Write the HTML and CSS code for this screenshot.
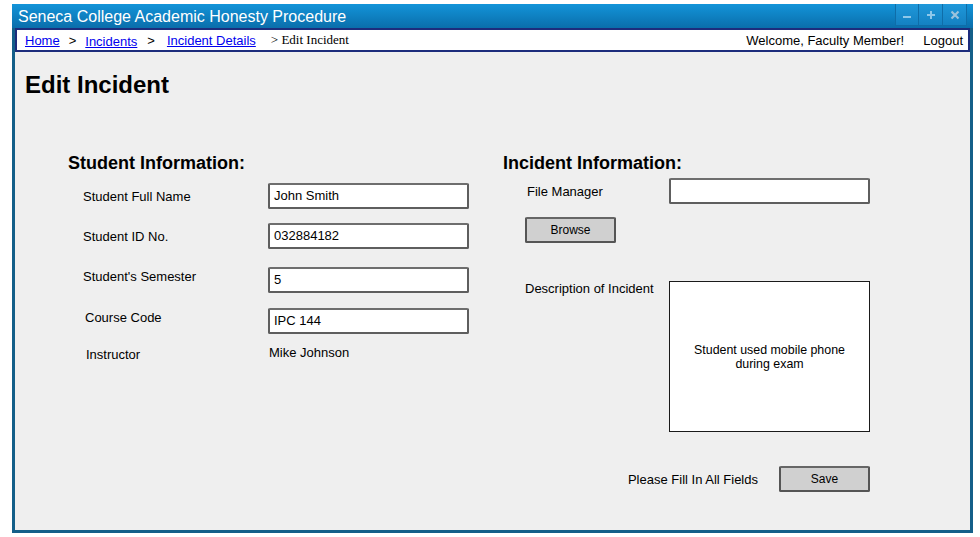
FILE: index.html
```html
<!DOCTYPE html>
<html>
<head>
<meta charset="utf-8">
<title>Edit Incident</title>
<link rel="stylesheet" href="styles.css">
</head>
<body>
<div class="window">
  <div class="titlebar">
    <span class="title">Seneca College Academic Honesty Procedure</span>
    <div class="winbtns">
      <span class="winbtn"><svg width="10" height="10" viewBox="0 0 10 10"><rect x="1" y="6" width="8" height="2" fill="#8fc8ea"/></svg></span>
      <span class="winbtn"><svg width="10" height="10" viewBox="0 0 10 10"><rect x="1" y="4" width="8" height="2" fill="#8fc8ea"/><rect x="4" y="1" width="2" height="8" fill="#8fc8ea"/></svg></span>
      <span class="winbtn"><svg width="10" height="10" viewBox="0 0 10 10"><path d="M1.5 1.5 L8.5 8.5 M8.5 1.5 L1.5 8.5" stroke="#9cc3dc" stroke-width="2.2"/></svg></span>
    </div>
  </div>
  <div class="nav">
    <div class="crumbs">
      <a href="#" class="link">Home</a>
      <span class="sep s1">&gt;</span>
      <a href="#" class="link low">Incidents</a>
      <span class="sep s2">&gt;</span>
      <a href="#" class="link">Incident Details</a>
      <span class="current">&gt; Edit Incident</span>
    </div>
    <div class="user">
      <span>Welcome, Faculty Member!</span>
      <span class="logout">Logout</span>
    </div>
  </div>
  <div class="content">
    <h1 class="page-title">Edit Incident</h1>
    <div class="columns">
      <div class="col-left">
        <h2 class="section">Student Information:</h2>
        <div class="row m1">
          <span class="label">Student Full Name</span>
          <div class="input">John Smith</div>
        </div>
        <div class="row m2">
          <span class="label">Student ID No.</span>
          <div class="input">032884182</div>
        </div>
        <div class="row m3">
          <span class="label up">Student's Semester</span>
          <div class="input">5</div>
        </div>
        <div class="row m4">
          <span class="label up in2">Course Code</span>
          <div class="input">IPC 144</div>
        </div>
        <div class="row m5">
          <span class="label in3 down">Instructor</span>
          <span class="value">Mike Johnson</span>
        </div>
      </div>
      <div class="col-right">
        <h2 class="section">Incident Information:</h2>
        <div class="rrow fm">
          <span class="rlabel">File Manager</span>
          <div class="input"></div>
        </div>
        <div class="btn browse">Browse</div>
        <div class="rrow desc">
          <span class="rlabel dl">Description of Incident</span>
          <div class="textarea"><span>Student used mobile phone<br>during exam</span></div>
        </div>
        <div class="actions">
          <span class="note">Please Fill In All Fields</span>
          <div class="btn">Save</div>
        </div>
      </div>
    </div>
  </div>
</div>
</body>
</html>
```

FILE: styles.css
```css
* { box-sizing: border-box; }
html, body { margin: 0; padding: 0; background: #ffffff; }
body { font-family: "Liberation Sans", Arial, sans-serif; color: #000; }

.window {
  margin: 4px 0 0 12px;
  width: 961px;
  height: 529px;
  background: #145f89;
  padding: 0 3px 3px 3px;
  display: flex;
  flex-direction: column;
}

.titlebar {
  height: 24px;
  margin: 0 -3px;
  padding: 0 6px;
  display: flex;
  align-items: flex-start;
  justify-content: space-between;
  background: linear-gradient(#1394d9, #0a6eab);
}
.title {
  color: #fff;
  font-size: 16px;
  line-height: 25px;
}
.winbtns { display: flex; }
.winbtn {
  width: 24px;
  height: 22px;
  display: flex;
  align-items: center;
  justify-content: center;
  background: linear-gradient(#1f98da, #1481c2);
  border-right: 1px solid #0f6da8;
  border-bottom: 1px solid #0f6da8;
}
.winbtn:first-child { border-left: 1px solid #0f6da8; }

.nav {
  height: 24px;
  background: #fff;
  border: 2px solid #1d2c7c;
  display: flex;
  align-items: center;
  justify-content: space-between;
  padding: 0 5px 0 8px;
  font-size: 13px;
}
.crumbs { display: flex; align-items: center; }
.link { color: #0000ee; text-decoration: underline; }
.low { position: relative; top: 1px; }
.sep { color: #000; margin: 0 9px 0 9px; }
.s2 { margin: 0 12px 0 10px; }
.current {
  font-family: "Liberation Serif", "Times New Roman", serif;
  font-size: 13px;
  margin-left: 15px;
}
.user { display: flex; }
.logout { margin-left: 19px; }

.content {
  flex: 1;
  background: #efefef;
  padding: 0 0 0 10px;
}
.page-title {
  margin: 19px 0 0 0;
  font-size: 24px;
  line-height: 28px;
  font-weight: bold;
}
.columns {
  display: flex;
  margin: 53px 0 0 43px;
}
.col-left { width: 435px; }
.col-right { width: 367px; }
.section {
  margin: 0;
  font-size: 18px;
  line-height: 22px;
  font-weight: bold;
}

.row {
  display: flex;
  align-items: center;
  height: 26px;
  font-size: 13px;
}
.m1 { margin-top: 9px; }
.m2 { margin-top: 14px; }
.m3 { margin-top: 18px; }
.m4 { margin-top: 15px; }
.m5 { margin-top: 6px; }
.label { width: 200px; padding-left: 15px; }
.up { margin-bottom: 8px; }
.down { margin-top: 2px; }
.in2 { padding-left: 17px; }
.in3 { padding-left: 18px; }
.value { padding-left: 1px; margin-bottom: 2px; }

.input {
  width: 201px;
  height: 26px;
  background: #fff;
  border: 2px solid #5e5e5e;
  border-top-color: #6e6e6e;
  border-radius: 2px;
  font-size: 13px;
  line-height: 22px;
  padding-left: 4px;
}

.rrow { display: flex; font-size: 13px; }
.rlabel { width: 166px; }
.fm { margin-top: 4px; align-items: center; }
.fm .rlabel { padding-left: 24px; }
.browse { margin: 13px 0 0 22px; }
.desc { margin-top: 38px; align-items: flex-start; }
.dl { padding-left: 22px; line-height: 15px; }
.textarea {
  width: 201px;
  height: 151px;
  background: #fff;
  border: 1px solid #1a1a1a;
  display: flex;
  align-items: center;
  justify-content: center;
  text-align: center;
  font-size: 12.4px;
  line-height: 14px;
}

.btn {
  width: 91px;
  height: 26px;
  background: #d0d0d0;
  border: 2px solid #555;
  border-top-color: #666;
  border-radius: 2px;
  font-size: 12px;
  display: flex;
  align-items: center;
  justify-content: center;
}
.actions {
  display: flex;
  align-items: center;
  justify-content: flex-end;
  margin-top: 34px;
  font-size: 13px;
}
.note { margin-right: 21px; }
```
